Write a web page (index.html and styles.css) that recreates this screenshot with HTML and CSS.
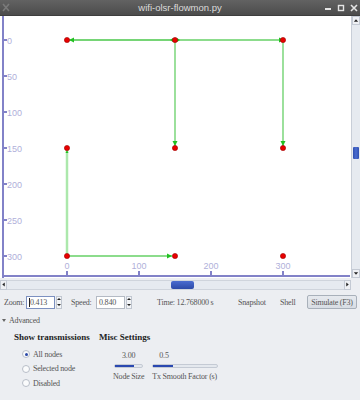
FILE: index.html
```html
<!DOCTYPE html>
<html>
<head>
<meta charset="utf-8">
<link rel="stylesheet" href="styles.css">
</head>
<body>
<div class="window">
  <div class="titlebar">
    <svg class="appicon" width="8" height="9" viewBox="0 0 8 9"><path d="M1 1 L7 8 M7 1 L1 8" stroke="#7a7a7a" stroke-width="1.6"/></svg>
    <span class="title">wifi-olsr-flowmon.py</span>
    <div class="wbtns">
      <svg width="8" height="8" viewBox="0 0 8 8"><rect x="1" y="4" width="6" height="2" fill="#e4e4e4"/></svg>
      <svg width="8" height="8" viewBox="0 0 8 8"><rect x="1.5" y="1.5" width="5" height="5" fill="none" stroke="#e4e4e4" stroke-width="1.4"/></svg>
      <svg width="8" height="8" viewBox="0 0 8 8"><path d="M1 1 L7 7 M7 1 L1 7" stroke="#e4e4e4" stroke-width="1.6"/></svg>
    </div>
  </div>
  <div class="viewport">
    <div class="canvas">
      <svg width="351" height="262" viewBox="0 0 351 262" class="plot">
        <g fill="#8282c8">
          <rect x="2" y="0" width="2" height="262"/>
          <rect x="2" y="259" width="348" height="2"/>
          <rect x="2" y="23" width="5" height="2"/>
          <rect x="2" y="59" width="5" height="2"/>
          <rect x="2" y="95" width="5" height="2"/>
          <rect x="2" y="131" width="5" height="2"/>
          <rect x="2" y="167" width="5" height="2"/>
          <rect x="2" y="203" width="5" height="2"/>
          <rect x="2" y="239" width="5" height="2"/>
          <rect x="66" y="255" width="2" height="5"/>
          <rect x="138" y="255" width="2" height="5"/>
          <rect x="210" y="255" width="2" height="5"/>
          <rect x="282" y="255" width="2" height="5"/>
        </g>
        <g class="axlabel">
          <text x="7" y="27.5">0</text>
          <text x="7" y="63.5">50</text>
          <text x="7" y="99.5">100</text>
          <text x="7" y="135.5">150</text>
          <text x="7" y="171.5">200</text>
          <text x="7" y="207.5">250</text>
          <text x="7" y="243.5">300</text>
          <text x="67" y="253" text-anchor="middle">0</text>
          <text x="139" y="253" text-anchor="middle">100</text>
          <text x="211" y="253" text-anchor="middle">200</text>
          <text x="283" y="253" text-anchor="middle">300</text>
        </g>
        <g fill="none" stroke-linecap="butt">
          <line x1="67" y1="132" x2="67" y2="240" stroke="#ace8ac" stroke-width="2.5"/>
          <line x1="67" y1="24" x2="175" y2="24" stroke="#a6e4a6" stroke-width="2"/>
          <line x1="70" y1="24" x2="283" y2="24" stroke="#66d066" stroke-width="1.3"/>
          <line x1="175" y1="24" x2="175" y2="130" stroke="#66d066" stroke-width="1.3"/>
          <line x1="283" y1="24" x2="283" y2="130" stroke="#66d066" stroke-width="1.3"/>
          <line x1="67" y1="240" x2="172" y2="240" stroke="#66d066" stroke-width="1.3"/>
        </g>
        <g fill="#22c022">
          <path d="M69 24 L74 21.5 L74 26.5 Z"/>
          <path d="M177 22 L180 24 L177 26 Z"/>
          <path d="M173 22 L170 24 L173 26 Z"/>
          <path d="M279 21.5 L284 24 L279 26.5 Z"/>
          <path d="M172.5 125 L177.5 125 L175 130 Z"/>
          <path d="M280.5 125 L285.5 125 L283 130 Z"/>
          <path d="M67 134 L65.5 137 L68.5 137 Z"/>
          <path d="M167 237.5 L172 240 L167 242.5 Z"/>
        </g>
        <g fill="#e80000" stroke="#a00000" stroke-width="0.6">
          <circle cx="67" cy="24" r="2.6"/>
          <circle cx="175" cy="24" r="2.6"/>
          <circle cx="283" cy="24" r="2.6"/>
          <circle cx="67" cy="132" r="2.6"/>
          <circle cx="175" cy="132" r="2.6"/>
          <circle cx="283" cy="132" r="2.6"/>
          <circle cx="67" cy="240" r="2.6"/>
          <circle cx="175" cy="240" r="2.6"/>
          <circle cx="283" cy="240" r="2.6"/>
        </g>
      </svg>
    </div>
    <div class="vscroll">
      <div class="sbtn"><svg width="7" height="7" viewBox="0 0 7 7"><path d="M1 5 L3.5 2 L6 5 Z" fill="#222"/></svg></div>
      <div class="vtrack"><div class="vthumb"></div></div>
      <div class="sbtn"><svg width="7" height="7" viewBox="0 0 7 7"><path d="M1 2 L3.5 5 L6 2 Z" fill="#222"/></svg></div>
    </div>
  </div>
  <div class="hscroll">
    <div class="hbtn"><svg width="6" height="7" viewBox="0 0 6 7"><path d="M4.5 1 L1.5 3.5 L4.5 6 Z" fill="#222"/></svg></div>
    <div class="htrack"><div class="hthumb"></div></div>
    <div class="hbtn"><svg width="6" height="7" viewBox="0 0 6 7"><path d="M1.5 1 L4.5 3.5 L1.5 6 Z" fill="#222"/></svg></div>
  </div>
  <div class="controls">
    <span class="lbl zoom">Zoom:</span>
    <div class="spin focus"><span class="val"><span class="caret"></span>0.413</span><span class="arrows"><i class="up"></i><i class="dn"></i></span></div>
    <span class="lbl speed">Speed:</span>
    <div class="spin"><span class="val">0.840</span><span class="arrows"><i class="up"></i><i class="dn"></i></span></div>
    <span class="lbl time">Time: 12.768000 s</span>
    <span class="lbl snap">Snapshot</span>
    <span class="lbl shell">Shell</span>
    <span class="button">Simulate (F3)</span>
  </div>
  <div class="expander"><span class="tri"></span>Advanced</div>
  <div class="settings">
    <div class="col trans">
      <div class="head">Show transmissions</div>
      <div class="radio on"><span class="dot"></span>All nodes</div>
      <div class="radio"><span class="dot"></span>Selected node</div>
      <div class="radio"><span class="dot"></span>Disabled</div>
    </div>
    <div class="col misc">
      <div class="head">Misc Settings</div>
      <div class="sliders">
        <div class="slider s1">
          <span class="sval">3.00</span>
          <div class="track"><div class="fill" style="width:19px"></div></div>
          <span class="slbl">Node Size</span>
        </div>
        <div class="slider s2">
          <span class="sval">0.5</span>
          <div class="track"><div class="fill" style="width:20px"></div></div>
          <span class="slbl">Tx Smooth Factor (s)</span>
        </div>
      </div>
    </div>
  </div>
</div>
</body>
</html>
```
FILE: styles.css
```css
html, body {
  margin: 0;
  padding: 0;
}
body {
  width: 360px;
  height: 400px;
  overflow: hidden;
  background: #eceef2;
  font-family: "Liberation Serif", serif;
  font-size: 8px;
  letter-spacing: -0.2px;
  color: #555;
}
.window {
  width: 360px;
  height: 400px;
  display: flex;
  flex-direction: column;
}
.titlebar {
  height: 16px;
  flex: none;
  background: linear-gradient(#626262, #4c4c4c);
  display: flex;
  align-items: center;
  position: relative;
  box-sizing: border-box;
  border-bottom: 1px solid #3e3e3e;
  letter-spacing: 0;
}
.appicon {
  margin-left: 2px;
}
.title {
  position: absolute;
  left: 0;
  right: 0;
  text-align: center;
  font-family: "Liberation Sans", sans-serif;
  font-size: 9.5px;
  color: #dcdcdc;
  line-height: 15px;
}
.wbtns {
  margin-left: auto;
  display: flex;
  gap: 5px;
  margin-right: 2px;
}
.viewport {
  height: 262px;
  flex: none;
  display: flex;
}
.canvas {
  width: 351px;
  height: 262px;
  background: #fff;
}
.plot {
  display: block;
}
.axlabel text {
  font-family: "Liberation Sans", sans-serif;
  font-size: 9px;
  letter-spacing: 0;
  fill: #b0b0da;
}
.vscroll {
  width: 9px;
  display: flex;
  flex-direction: column;
  background: #e6eaf0;
  border-left: 1px solid #c8ced8;
  box-sizing: border-box;
}
.sbtn {
  height: 9px;
  display: flex;
  align-items: center;
  justify-content: center;
  background: #eef0f4;
  border: 1px solid #c4cad4;
  box-sizing: border-box;
}
.vtrack {
  flex: 1;
  padding-top: 122px;
  box-sizing: border-box;
}
.vthumb {
  height: 12px;
  margin: 0 1px;
  background: linear-gradient(90deg, #2f4fb0, #4a6cd0, #2f4fb0);
  border-radius: 1px;
}
.hscroll {
  height: 13px;
  flex: none;
  display: flex;
  align-items: center;
  width: 351px;
  box-sizing: border-box;
}
.hbtn {
  width: 7px;
  height: 10px;
  display: flex;
  align-items: center;
  justify-content: center;
  background: #eef0f4;
  border: 1px solid #c4cad4;
  box-sizing: border-box;
}
.htrack {
  flex: 1;
  height: 10px;
  background: #e6eaf0;
  border-top: 1px solid #cfd4dc;
  border-bottom: 1px solid #cfd4dc;
  box-sizing: border-box;
  padding-left: 164px;
}
.hthumb {
  width: 23px;
  height: 8px;
  background: linear-gradient(#4a6cd0, #2c4aa8);
  border-radius: 2px;
}
.controls {
  height: 22px;
  flex: none;
  display: flex;
  align-items: center;
  padding-left: 4px;
  box-sizing: border-box;
}
.lbl {
  white-space: nowrap;
}
.zoom {
  width: 22px;
}
.spin {
  display: flex;
  align-items: stretch;
  height: 13px;
}
.spin .val {
  width: 29px;
  background: #fff;
  border: 1px solid #b4bac4;
  box-sizing: border-box;
  padding-left: 2px;
  display: flex;
  align-items: center;
}
.spin.focus .val {
  border-color: #7c90c0;
}
.caret {
  width: 1px;
  height: 9px;
  background: #222;
}
.arrows {
  width: 6px;
  margin-left: 1px;
  display: flex;
  flex-direction: column;
  border: 1px solid #c0c6d0;
  background: #f2f4f7;
  box-sizing: border-box;
}
.arrows i {
  flex: 1;
  display: flex;
  align-items: center;
  justify-content: center;
}
.arrows i::after {
  content: "";
  border-left: 2px solid transparent;
  border-right: 2px solid transparent;
}
.arrows .up::after {
  border-bottom: 2px solid #222;
}
.arrows .dn::after {
  border-top: 2px solid #222;
}
.speed {
  margin-left: 9px;
  width: 25px;
}
.time {
  margin-left: 25px;
  width: 81px;
}
.snap {
  width: 42px;
}
.shell {
  width: 27px;
}
.button {
  height: 14px;
  width: 50px;
  box-sizing: border-box;
  border: 1px solid #a8b0ba;
  border-radius: 2px;
  background: linear-gradient(#e6e9ee, #d8dde4);
  display: flex;
  align-items: center;
  justify-content: center;
  white-space: nowrap;
}
.expander {
  height: 14px;
  flex: none;
  display: flex;
  align-items: center;
  padding-left: 2px;
}
.tri {
  width: 0;
  height: 0;
  border-left: 2.5px solid transparent;
  border-right: 2.5px solid transparent;
  border-top: 3px solid #666;
  margin-right: 3px;
}
.settings {
  display: flex;
  padding-left: 14px;
  padding-top: 5px;
}
.head {
  font-weight: bold;
  font-size: 9px;
  letter-spacing: 0;
  color: #222;
  height: 10px;
  line-height: 10px;
}
.trans {
  width: 85px;
}
.radio {
  display: flex;
  align-items: center;
  height: 14.5px;
  padding-left: 8px;
}
.trans .head {
  margin-bottom: 5px;
}
.dot {
  width: 8px;
  height: 8px;
  border-radius: 50%;
  border: 1px solid #b8bec8;
  background: #fafbfc;
  box-sizing: border-box;
  margin-right: 3px;
  position: relative;
}
.radio.on .dot::after {
  content: "";
  position: absolute;
  left: 2px;
  top: 2px;
  width: 3px;
  height: 3px;
  border-radius: 50%;
  background: #2a48a8;
}
.sliders {
  display: flex;
  margin-top: 9px;
  margin-left: 14px;
  gap: 8px;
}
.slider {
  display: flex;
  flex-direction: column;
  align-items: center;
}
.sval {
  height: 10px;
  line-height: 10px;
}
.track {
  height: 4px;
  background: #e4e8ee;
  border: 1px solid #c4cad4;
  border-radius: 2px;
  margin-top: 3px;
  box-sizing: border-box;
}
.fill {
  height: 2px;
  background: #2a48b0;
}
.slbl {
  margin-top: 4px;
  white-space: nowrap;
}
.s1 .track { width: 29px; }
.s2 {
  align-items: flex-start;
}
.s2 .sval { margin-left: 7px; }
.s2 .track { width: 66px; }
```
